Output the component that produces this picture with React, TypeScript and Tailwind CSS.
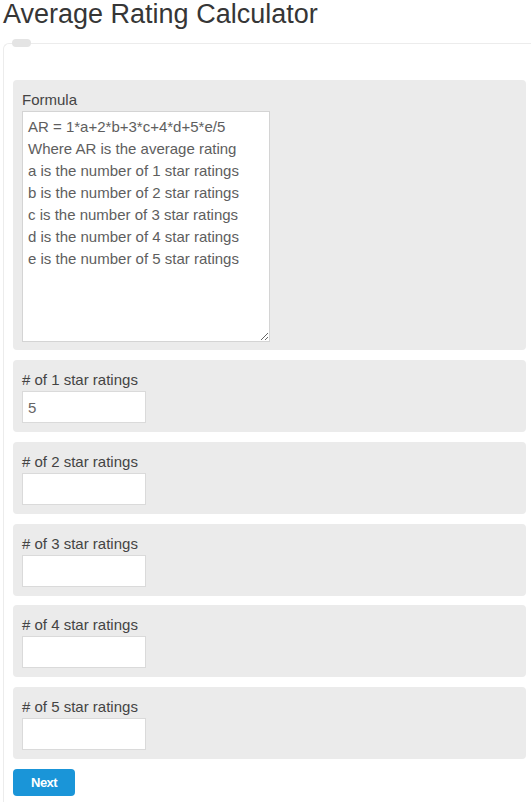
import { useState } from 'react';

const fields = [
  { id: 'a', label: '# of 1 star ratings', initial: '5' },
  { id: 'b', label: '# of 2 star ratings', initial: '' },
  { id: 'c', label: '# of 3 star ratings', initial: '' },
  { id: 'd', label: '# of 4 star ratings', initial: '' },
  { id: 'e', label: '# of 5 star ratings', initial: '' },
];

const formula = `AR = 1*a+2*b+3*c+4*d+5*e/5
Where AR is the average rating
a is the number of 1 star ratings
b is the number of 2 star ratings
c is the number of 3 star ratings
d is the number of 4 star ratings
e is the number of 5 star ratings`;

export default function App() {
  const [values, setValues] = useState<Record<string, string>>(
    Object.fromEntries(fields.map((f) => [f.id, f.initial])),
  );

  return (
    <div className="h-[802px] w-full overflow-hidden bg-white font-['Liberation_Sans',Arial,sans-serif]">
      <h1 className="mb-[15px] pl-[3px] text-[27px] leading-[28px] font-normal text-[#363636]">
        Average Rating Calculator
      </h1>

      <div className="relative mr-[-10px] ml-[3px] rounded-tl-[6px] border-t border-l border-[#ececec] pt-[36px] pr-[15px] pb-[6px] pl-[9px]">
        <span className="absolute top-[-5px] left-[8px] h-[8px] w-[19px] rounded-full bg-[#e4e4e4]" />

        <div className="mb-[10px] rounded-[4px] bg-[#ebebeb] px-[9px] pt-[9px] pb-[8px]">
          <label className="block text-[15px] leading-[22px] text-[#444]">Formula</label>
          <textarea
            readOnly
            value={formula}
            className="block h-[231px] w-[248px] border border-[#d4d4d4] bg-white px-[5px] pt-[4px] pb-[2px] text-[15px] leading-[22px] text-[#5e5e5e] outline-none"
          />
        </div>

        {fields.map((f) => (
          <div key={f.id} className="mb-[9.75px] rounded-[4px] bg-[#ebebeb] px-[9px] pt-[9px] pb-[9px]">
            <label htmlFor={f.id} className="block text-[15px] leading-[22px] text-[#444]">
              {f.label}
            </label>
            <input
              id={f.id}
              type="text"
              value={values[f.id]}
              onChange={(e) => setValues({ ...values, [f.id]: e.target.value })}
              className="block h-[32px] w-[124px] border border-[#dadada] bg-white px-[5px] text-[15px] text-[#666] outline-none"
            />
          </div>
        ))}

        <button
          type="button"
          className="mt-[0.25px] block h-[27px] w-[62px] rounded-[4px] bg-[#1a95d8] text-[13px] font-bold tracking-[-0.6px] text-white"
        >
          Next
        </button>
      </div>
    </div>
  );
}
